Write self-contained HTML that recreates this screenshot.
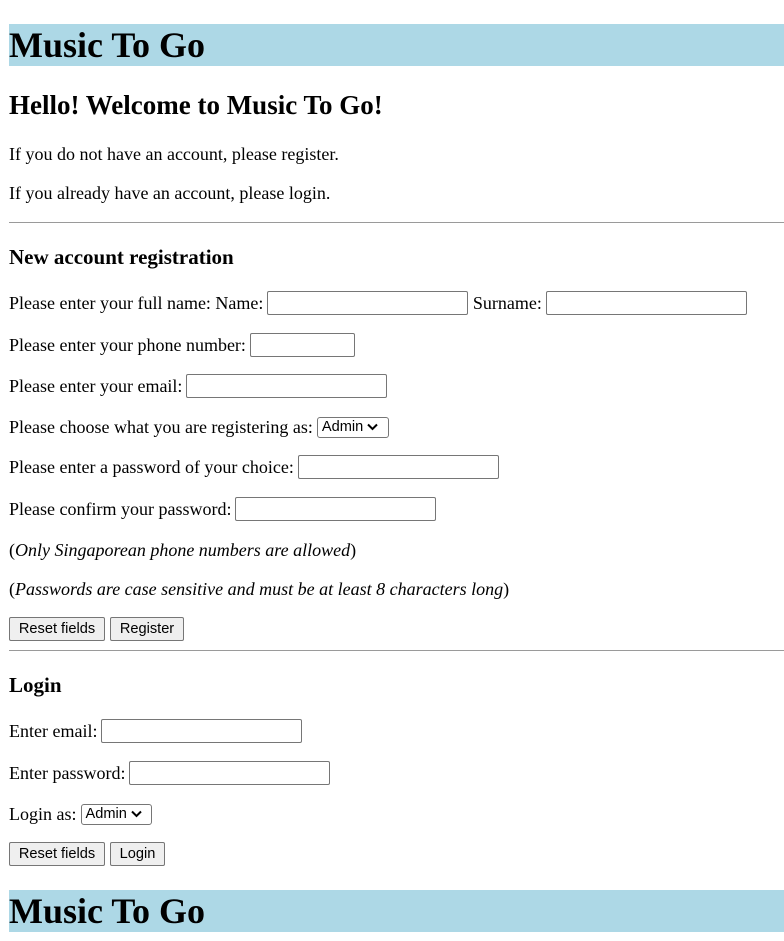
<!DOCTYPE html>
<html><head><meta charset="utf-8"><style>
body{margin:0;width:784px;height:941px;position:relative;font-family:"Liberation Serif",serif;font-size:18px;color:#000;background:#fff;overflow:hidden}
.hd{position:absolute;left:9px;right:0;height:42px;background:#add8e6;font-weight:bold;font-size:36px;line-height:42px;white-space:nowrap}
.r{position:absolute;left:9px;height:24px;display:flex;align-items:center;white-space:nowrap}
.in{display:inline-block;border:1px solid #767676;border-radius:2px;box-sizing:border-box;height:24px;background:#fff;margin-left:4px}
.sel{display:inline-flex;align-items:center;height:21px;border:1px solid #767676;border-radius:3px;box-sizing:border-box;font-family:"Liberation Sans",sans-serif;font-size:14.6px;padding:0 4px;margin-left:4px;background:#fff}
.btn{display:inline-flex;align-items:center;justify-content:center;height:24px;box-sizing:border-box;border:1px solid #767676;border-radius:2px;background:#efefef;font-family:"Liberation Sans",sans-serif;font-size:14.6px;margin-right:5px}
hr{position:absolute;left:9px;right:0;margin:0;border:0;border-top:1px solid #9a9a9a;height:0}
</style></head><body>
<div class="hd" style="top:24px">Music To Go</div>
<div class="r" style="top:93px;font-size:27px;font-weight:bold">Hello! Welcome to Music To Go!</div>
<div class="r" style="top:142px">If you do not have an account, please register.</div>
<div class="r" style="top:181px">If you already have an account, please login.</div>
<hr style="top:222px">
<div class="r" style="top:245px;font-size:21px;font-weight:bold">New account registration</div>
<div class="r" style="top:291px">Please enter your full name: Name:<span class="in" style="width:201px"></span>&nbsp;Surname:<span class="in" style="width:201px"></span></div>
<div class="r" style="top:333px">Please enter your phone number:<span class="in" style="width:105px"></span></div>
<div class="r" style="top:374px">Please enter your email:<span class="in" style="width:201px"></span></div>
<div class="r" style="top:415px">Please choose what you are registering as:<span class="sel" style="width:72px">Admin&nbsp;<svg width="11" height="8" viewBox="0 0 11 8"><path d="M1 1.5l4.5 4.5 4.5-4.5" fill="none" stroke="#000" stroke-width="2"/></svg></span></div>
<div class="r" style="top:455px">Please enter a password of your choice:<span class="in" style="width:201px"></span></div>
<div class="r" style="top:497px">Please confirm your password:<span class="in" style="width:201px"></span></div>
<div class="r" style="top:538px">(<i>Only Singaporean phone numbers are allowed</i>)</div>
<div class="r" style="top:577px">(<i>Passwords are case sensitive and must be at least 8 characters long</i>)</div>
<div class="r" style="top:617px"><span class="btn" style="width:96px">Reset fields</span><span class="btn" style="width:74px">Register</span></div>
<hr style="top:650px">
<div class="r" style="top:673px;font-size:21px;font-weight:bold">Login</div>
<div class="r" style="top:719px">Enter email:<span class="in" style="width:201px"></span></div>
<div class="r" style="top:761px">Enter password:<span class="in" style="width:201px"></span></div>
<div class="r" style="top:802px">Login as:<span class="sel" style="width:71px">Admin&nbsp;<svg width="11" height="8" viewBox="0 0 11 8"><path d="M1 1.5l4.5 4.5 4.5-4.5" fill="none" stroke="#000" stroke-width="2"/></svg></span></div>
<div class="r" style="top:842px"><span class="btn" style="width:96px">Reset fields</span><span class="btn" style="width:55px">Login</span></div>
<div class="hd" style="top:890px">Music To Go</div>
</body></html>
